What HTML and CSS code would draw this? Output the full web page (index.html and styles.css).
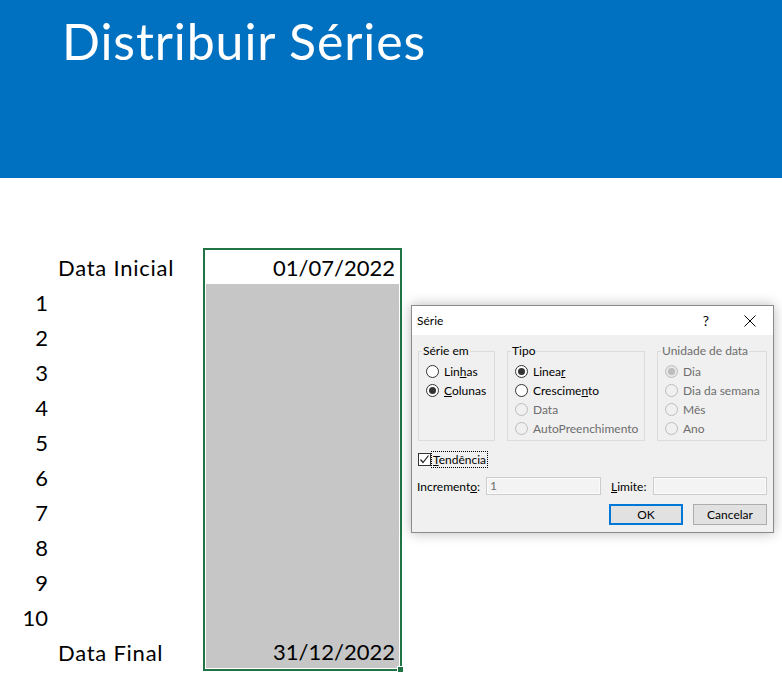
FILE: index.html
```html
<!DOCTYPE html>
<html lang="pt-BR">
<head>
<meta charset="utf-8">
<title>Distribuir Séries</title>
<link rel="stylesheet" href="styles.css">
</head>
<body>
  <header class="banner">
    <h1 class="banner-title">Distribuir Séries</h1>
  </header>

  <main class="sheet">
    <div class="index">
      <span class="num"></span><span class="label">Data Inicial</span>
      <span class="num">1</span><span class="label"></span>
      <span class="num">2</span><span class="label"></span>
      <span class="num">3</span><span class="label"></span>
      <span class="num">4</span><span class="label"></span>
      <span class="num">5</span><span class="label"></span>
      <span class="num">6</span><span class="label"></span>
      <span class="num">7</span><span class="label"></span>
      <span class="num">8</span><span class="label"></span>
      <span class="num">9</span><span class="label"></span>
      <span class="num">10</span><span class="label"></span>
      <span class="num"></span><span class="label">Data Final</span>
    </div>

    <div class="range">
      <div class="active-cell">01/07/2022</div>
      <div class="selected-cells">
        <span class="cell-value">31/12/2022</span>
      </div>
      <span class="fill-handle"></span>
    </div>
  </main>

  <section class="dialog" role="dialog" aria-label="Série">
    <div class="dialog-titlebar">
      <span class="dialog-title">Série</span>
      <span class="help">?</span>
      <span class="close">
        <svg width="12" height="12" viewBox="0 0 12 12"><path d="M0.5 0.5 L11.5 11.5 M11.5 0.5 L0.5 11.5" stroke="#000" stroke-width="1" fill="none"/></svg>
      </span>
    </div>

    <div class="dialog-body">
      <div class="groups">
        <fieldset class="group group-serie">
          <legend>Série em</legend>
          <div class="option"><span class="radio"></span><span>Lin<u>h</u>as</span></div>
          <div class="option"><span class="radio checked"></span><span><u>C</u>olunas</span></div>
        </fieldset>
        <fieldset class="group group-tipo">
          <legend>Tipo</legend>
          <div class="option"><span class="radio checked"></span><span>Linea<u>r</u></span></div>
          <div class="option"><span class="radio"></span><span>Crescime<u>n</u>to</span></div>
          <div class="option disabled"><span class="radio"></span><span>Data</span></div>
          <div class="option disabled"><span class="radio"></span><span>AutoPreenchimento</span></div>
        </fieldset>
        <fieldset class="group group-unidade disabled">
          <legend>Unidade de data</legend>
          <div class="option disabled"><span class="radio checked"></span><span>Dia</span></div>
          <div class="option disabled"><span class="radio"></span><span>Dia da semana</span></div>
          <div class="option disabled"><span class="radio"></span><span>Mês</span></div>
          <div class="option disabled"><span class="radio"></span><span>Ano</span></div>
        </fieldset>
      </div>

      <div class="trend">
        <span class="checkbox">
          <svg width="11" height="11" viewBox="0 0 11 11"><path d="M1.5 5.5 L4 8.5 L9.5 1.5" stroke="#222" stroke-width="1.2" fill="none"/></svg>
        </span>
        <span class="trend-label"><u>T</u>endência</span>
      </div>

      <div class="fields">
        <span class="field-label field-inc">Increment<u>o</u>:</span>
        <span class="field field-inc-box">1</span>
        <span class="field-label field-lim"><u>L</u>imite:</span>
        <span class="field field-lim-box"></span>
      </div>

      <div class="buttons">
        <button class="btn btn-default" type="button">OK</button>
        <button class="btn" type="button">Cancelar</button>
      </div>
    </div>
  </section>
</body>
</html>
```

FILE: styles.css
```css
html, body {
  margin: 0;
  padding: 0;
  background: #ffffff;
}

body {
  width: 782px;
  height: 689px;
  overflow: hidden;
  font-family: Lato, "Open Sans", sans-serif;
  color: #000;
}

/* blue title band */
.banner {
  height: 178px;
  background: #0070c0;
  padding-left: 62px;
  box-sizing: border-box;
}

.banner-title {
  margin: 0;
  padding-top: 9px;
  font-family: Lato, sans-serif;
  font-weight: 400;
  font-size: 50px;
  line-height: 64px;
  color: #ffffff;
  letter-spacing: 0.9px;
}

/* spreadsheet area */
.sheet {
  display: flex;
  align-items: flex-start;
  margin-top: 70px;
  font-family: Lato, sans-serif;
  font-size: 22px;
}

.index {
  display: grid;
  grid-template-columns: 48px 155px;
  grid-auto-rows: 35px;
  margin-top: 2px;
}

.num {
  text-align: right;
  line-height: 35px;
}

.label {
  padding-left: 10px;
  line-height: 35px;
  letter-spacing: 0.75px;
}

.range {
  position: relative;
  width: 199px;
  height: 423px;
  box-sizing: border-box;
  border: 2px solid #217346;
  padding: 0 1px 1px 1px;
  background: #ffffff;
  display: flex;
  flex-direction: column;
}

.active-cell {
  height: 34px;
  line-height: 36px;
  text-align: right;
  padding-right: 4px;
  flex: none;
}

.selected-cells {
  flex: 1;
  background: #c6c6c6;
  display: flex;
  flex-direction: column;
  justify-content: flex-end;
  align-items: flex-end;
  padding-right: 4px;
}

.cell-value {
  line-height: 33px;
}

.fill-handle {
  position: absolute;
  right: -4px;
  bottom: -4px;
  width: 5px;
  height: 5px;
  background: #217346;
  border: 1px solid #ffffff;
}

/* Série dialog */
.dialog {
  position: absolute;
  left: 411px;
  top: 305px;
  width: 363px;
  height: 228px;
  box-sizing: border-box;
  border: 1px solid #8a8a8a;
  background: #f0f0f0;
  box-shadow: 0 0 12px rgba(0, 0, 0, 0.28);
  font-family: Lato, sans-serif;
  font-size: 12px;
  color: #000;
}

.dialog-titlebar {
  height: 29px;
  background: #ffffff;
  display: flex;
  align-items: center;
  padding-left: 5px;
}

.dialog-title {
  flex: 1;
  font-size: 12px;
}

.help {
  font-size: 14px;
  width: 12px;
  text-align: center;
  margin-right: 32px;
}

.close {
  display: flex;
  width: 12px;
  height: 12px;
  margin-right: 17px;
}

.dialog-body {
  padding: 8px 6px 0 6px;
  display: flex;
  flex-direction: column;
}

.groups {
  display: flex;
  gap: 12px;
}

.group {
  margin: 0;
  padding: 3px 0 0 7px;
  height: 98px;
  box-sizing: border-box;
  border: 1px solid #dcdcdc;
  min-width: 0;
}

.group legend {
  padding: 0 1px;
  margin-left: -4px;
  line-height: 16px;
}

.group.disabled legend {
  color: #6d6d6d;
}

.group-serie { width: 77px; }
.group-tipo { width: 138px; }
.group-unidade { width: 110px; }

.option {
  display: flex;
  align-items: center;
  gap: 5px;
  height: 19px;
}

.option.disabled {
  color: #6d6d6d;
}

.radio {
  width: 11px;
  height: 11px;
  border: 1px solid #333;
  border-radius: 50%;
  background: #fff;
  display: flex;
  align-items: center;
  justify-content: center;
  flex: none;
}

.radio.checked::after {
  content: "";
  width: 7px;
  height: 7px;
  border-radius: 50%;
  background: #333;
}

.option.disabled .radio {
  border-color: #bcbcbc;
  background: #f0f0f0;
}

.option.disabled .radio.checked {
  background: #e6e6e6;
}

.option.disabled .radio.checked::after {
  background: #bcbcbc;
}

.trend {
  display: flex;
  align-items: center;
  height: 16px;
  margin-top: 10px;
}

.checkbox {
  width: 11px;
  height: 11px;
  border: 1px solid #333;
  background: #fff;
  display: flex;
  margin-right: 1px;
}

.trend-label {
  outline: 1px dotted #000;
  outline-offset: 0;
  padding: 0 1px;
  line-height: 15px;
}

.fields {
  display: flex;
  align-items: center;
  margin-top: 10px;
  height: 18px;
}

.field-label {
  flex: none;
}

.field-inc {
  width: 69px;
  margin-left: -1px;
  padding-left: 0;
}

.field-lim {
  width: 42px;
  margin-left: 10px;
}

.field {
  height: 18px;
  box-sizing: border-box;
  border: 1px solid #cccccc;
  background: #f3f3f3;
  box-shadow: inset 0 0 0 1px #fbfbfb;
  color: #6d6d6d;
  padding-left: 3px;
  line-height: 16px;
}

.field-inc-box { width: 115px; }
.field-lim-box { width: 114px; }

.buttons {
  display: flex;
  justify-content: flex-end;
  gap: 10px;
  margin-top: 9px;
}

.btn {
  width: 74px;
  height: 21px;
  box-sizing: border-box;
  border: 1px solid #adadad;
  background: #e1e1e1;
  font-family: Lato, sans-serif;
  font-size: 12px;
  color: #000;
  padding: 0;
}

.btn-default {
  border: 2px solid #0078d7;
}
```
